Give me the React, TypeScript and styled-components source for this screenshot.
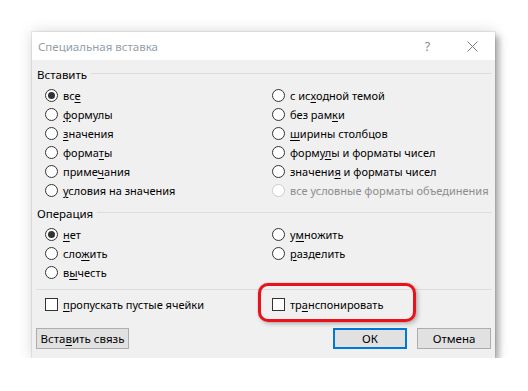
import React from 'react';
import styled, { createGlobalStyle } from 'styled-components';

const Global = createGlobalStyle`
  html, body { margin: 0; padding: 0; background: #ffffff; }
  body { font-family: "Noto Sans", "Open Sans", sans-serif; }
`;

const Page = styled.div`
  padding: 32px 0 0 32px;
`;

const Dialog = styled.div`
  width: 463px;
  height: 326px;
  background: #f0f0f0;
  display: flex;
  flex-direction: column;
  font-family: "Noto Sans", "Open Sans", sans-serif;
  font-size: 11px;
  color: #000;
  box-shadow: 0 0 0 1px rgba(0, 0, 0, 0.06), 4px 4px 6px rgba(0, 0, 0, 0.28),
    0 0 14px rgba(0, 0, 0, 0.16);
`;

const TitleBar = styled.div`
  height: 28px;
  background: #ffffff;
  display: flex;
  align-items: center;
  padding-left: 6px;
`;

const Title = styled.div`
  flex: 1;
  color: #94a0aa;
  font-size: 11.5px;
`;

const TitleBtn = styled.div`
  width: 45px;
  height: 28px;
  display: flex;
  align-items: center;
  justify-content: center;
  color: #8a8a8a;
  font-size: 12.5px;
`;

const Body = styled.div`
  flex: 1;
  display: flex;
  flex-direction: column;
  padding: 6px 3px 0 5px;
`;

const GroupHeader = styled.div<{ $mt?: number }>`
  display: flex;
  align-items: center;
  height: 16px;
  gap: 4px;
  font-size: 11.5px;
  margin-top: ${(p) => p.$mt ?? 0}px;
  &::after {
    content: '';
    flex: 1;
    height: 1px;
    background: #dcdcdc;
    margin-top: -2px;
  }
`;

const OptionGrid = styled.div<{ $mt?: number }>`
  display: grid;
  grid-template-columns: 227px 1fr;
  grid-auto-rows: 19px;
  grid-auto-flow: column;
  padding-left: 8px;
  margin-top: ${(p) => p.$mt ?? 0}px;
`;

const Item = styled.label<{ $disabled?: boolean }>`
  position: relative;
  display: flex;
  align-items: center;
  gap: 5px;
  white-space: nowrap;
  color: ${(p) => (p.$disabled ? '#8d8d8d' : '#000')};
`;

const RadioCircle = styled.span<{ $checked?: boolean; $disabled?: boolean }>`
  width: 13px;
  height: 13px;
  box-sizing: border-box;
  border-radius: 50%;
  border: 1px solid ${(p) => (p.$disabled ? '#cccccc' : '#333333')};
  background: #fff;
  display: flex;
  align-items: center;
  justify-content: center;
  flex-shrink: 0;
  &::after {
    content: '';
    display: ${(p) => (p.$checked ? 'block' : 'none')};
    width: 7px;
    height: 7px;
    border-radius: 50%;
    background: #333333;
  }
`;

const CheckBox = styled.span`
  width: 13px;
  height: 13px;
  box-sizing: border-box;
  border: 1px solid #333333;
  background: #fff;
  flex-shrink: 0;
`;

const Separator = styled.div`
  height: 1px;
  background: #dcdcdc;
  margin: 7px 0 0 -1px;
`;

const Highlight = styled.div`
  position: absolute;
  left: -14px;
  top: -12px;
  width: 158px;
  height: 39px;
  box-sizing: border-box;
  border: 3.5px solid #e8111c;
  border-radius: 10px;
  box-shadow: 2px 2px 4px rgba(0, 0, 0, 0.25), 0 0 1px rgba(200, 0, 0, 0.6);
  pointer-events: none;
`;

const ButtonRow = styled.div`
  display: flex;
  gap: 10px;
  margin: 14px 1px 0 -1px;
`;

const Spacer = styled.div`
  flex: 1;
`;

const Button = styled.button<{ $width: number; $default?: boolean }>`
  width: ${(p) => p.$width}px;
  height: 21px;
  box-sizing: border-box;
  padding: 0;
  font-family: inherit;
  font-size: 11.5px;
  color: #000;
  background: #e1e1e1;
  border: ${(p) => (p.$default ? '2px solid #0078d7' : '1px solid #adadad')};
  display: flex;
  align-items: center;
  justify-content: center;
`;

const Ul = styled.span`
  text-decoration: underline;
  text-underline-offset: 2px;
`;

function Mnemonic({ text }: { text: string }) {
  const i = text.indexOf('&');
  if (i < 0) return <span>{text}</span>;
  return (
    <span>
      {text.slice(0, i)}
      <Ul>{text[i + 1]}</Ul>
      {text.slice(i + 2)}
    </span>
  );
}

type Opt = { label: string; checked?: boolean; disabled?: boolean };

const pasteLeft: Opt[] = [
  { label: 'вс&е', checked: true },
  { label: '&формулы' },
  { label: '&значения' },
  { label: 'форма&ты' },
  { label: 'приме&чания' },
  { label: '&условия на значения' },
];

const pasteRight: Opt[] = [
  { label: 'с ис&ходной темой' },
  { label: 'без рам&ки' },
  { label: '&ширины столбцов' },
  { label: 'форму&лы и форматы чисел' },
  { label: 'значени&я и форматы чисел' },
  { label: 'все условные форматы объединения', disabled: true },
];

const opLeft: Opt[] = [
  { label: '&нет', checked: true },
  { label: 'сло&жить' },
  { label: 'в&ычесть' },
];

const opRight: Opt[] = [{ label: 'у&множить' }, { label: '&разделить' }];

function RadioItem({ o }: { o: Opt }) {
  return (
    <Item $disabled={o.disabled}>
      <RadioCircle $checked={o.checked} $disabled={o.disabled} />
      <Mnemonic text={o.label} />
    </Item>
  );
}

function CloseIcon() {
  return (
    <svg width="11" height="11" viewBox="0 0 11 11">
      <path d="M0.5 0.5 L10.5 10.5 M10.5 0.5 L0.5 10.5" stroke="#7a7a7a" strokeWidth="1" fill="none" />
    </svg>
  );
}

export default function App() {
  return (
    <Page>
      <Global />
      <Dialog>
        <TitleBar>
          <Title>Специальная вставка</Title>
          <TitleBtn>?</TitleBtn>
          <TitleBtn>
            <CloseIcon />
          </TitleBtn>
        </TitleBar>
        <Body>
          <GroupHeader>Вставить</GroupHeader>
          <OptionGrid $mt={4} style={{ gridTemplateRows: 'repeat(6, 19px)' }}>
            {pasteLeft.map((o) => (
              <RadioItem key={o.label} o={o} />
            ))}
            {pasteRight.map((o) => (
              <RadioItem key={o.label} o={o} />
            ))}
          </OptionGrid>
          <GroupHeader $mt={5}>Операция</GroupHeader>
          <OptionGrid $mt={4} style={{ gridTemplateRows: 'repeat(3, 19px)' }}>
            {opLeft.map((o) => (
              <RadioItem key={o.label} o={o} />
            ))}
            {opRight.map((o) => (
              <RadioItem key={o.label} o={o} />
            ))}
          </OptionGrid>
          <Separator />
          <OptionGrid $mt={5} style={{ gridTemplateRows: '19px' }}>
            <Item>
              <CheckBox />
              <Mnemonic text="&пропускать пустые ячейки" />
            </Item>
            <Item>
              <Highlight />
              <CheckBox />
              <Mnemonic text="тр&анспонировать" />
            </Item>
          </OptionGrid>
          <ButtonRow>
            <Button $width={93}>
              <Mnemonic text="Вста&вить связь" />
            </Button>
            <Spacer />
            <Button $width={74} $default>
              ОК
            </Button>
            <Button $width={74}>Отмена</Button>
          </ButtonRow>
        </Body>
      </Dialog>
    </Page>
  );
}
